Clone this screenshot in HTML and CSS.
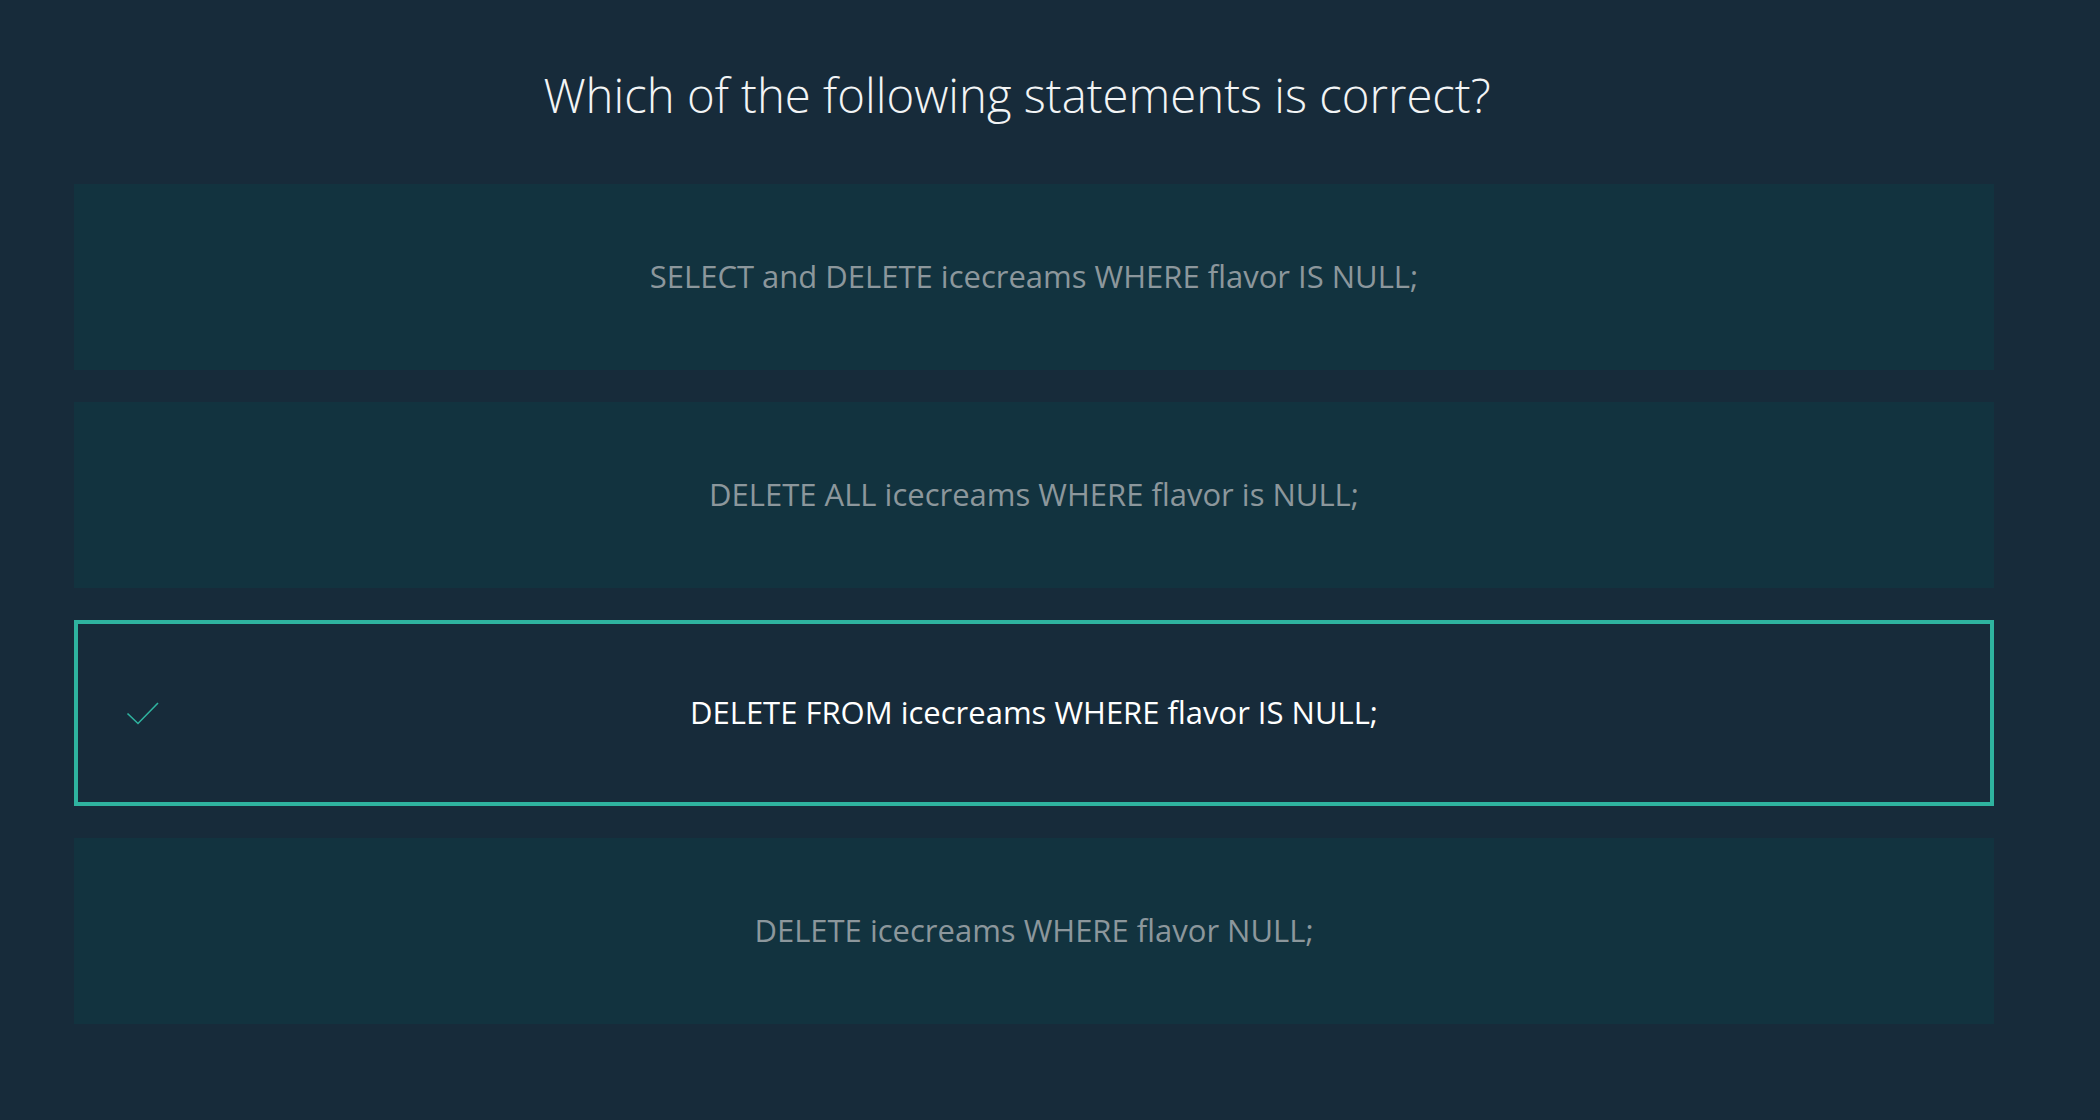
FILE: index.html
```html
<!DOCTYPE html>
<html lang="en">
<head>
<meta charset="utf-8">
<title>Quiz</title>
<link rel="stylesheet" href="styles.css">
</head>
<body>
<main class="quiz">
  <h1 class="question">Which of the following statements is correct?</h1>
  <ul class="answers">
    <li class="answer">SELECT and DELETE icecreams WHERE flavor IS NULL;</li>
    <li class="answer">DELETE ALL icecreams WHERE flavor is NULL;</li>
    <li class="answer answer--selected">
      <svg class="check" width="34" height="26" viewBox="0 0 34 26" aria-hidden="true"><path d="M1.5 12.5 L12 22.5 L32 2" fill="none" stroke="#2fb39f" stroke-width="1.6"/></svg>
      DELETE FROM icecreams WHERE flavor IS NULL;
    </li>
    <li class="answer">DELETE icecreams WHERE flavor NULL;</li>
  </ul>
</main>
</body>
</html>
```
FILE: styles.css
```css
html, body {
  margin: 0;
  padding: 0;
  background: #172b3a;
  height: 100%;
}
body {
  font-family: "Open Sans", "Noto Sans", sans-serif;
}
.quiz {
  width: 1920px;
  margin-left: 74px;
  padding-top: 57px;
}
.question {
  margin: 0 0 51px 0;
  padding-right: 34px;
  text-align: center;
  font-weight: 300;
  font-size: 47.3px;
  line-height: 76px;
  color: #f2f4f5;
}
.answers {
  list-style: none;
  margin: 0;
  padding: 0;
  display: flex;
  flex-direction: column;
  gap: 32px;
}
.answer {
  position: relative;
  height: 186px;
  box-sizing: border-box;
  padding-bottom: 2px;
  background: #12333f;
  display: flex;
  align-items: center;
  justify-content: center;
  font-size: 31px;
  color: #8c979c;
}
.answer--selected {
  background: #172b3a;
  border: 4px solid #2fb39f;
  color: #ffffff;
}
.check {
  position: absolute;
  left: 48px;
  top: 77px;
}
```
